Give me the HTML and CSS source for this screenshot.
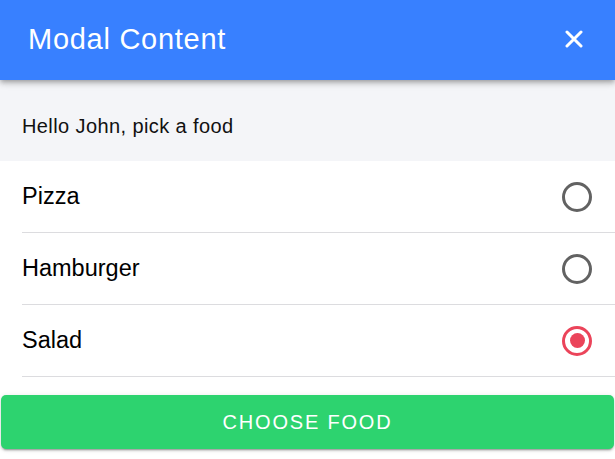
FILE: index.html
```html
<!DOCTYPE html>
<html>
<head>
<meta charset="utf-8">
<link rel="stylesheet" href="styles.css">
</head>
<body>
<div class="modal">
  <header class="toolbar">
    <h1 class="title">Modal Content</h1>
    <button class="close" aria-label="Close">
      <svg width="18" height="18" viewBox="0 0 18 18"><path d="M2 2 L16 16 M16 2 L2 16" stroke="#fff" stroke-width="3" stroke-linecap="round"/></svg>
    </button>
  </header>
  <div class="greeting">Hello John, pick a food</div>
  <div class="list">
    <div class="item"><div class="item-inner"><span class="label">Pizza</span><span class="radio"></span></div></div>
    <div class="item"><div class="item-inner"><span class="label">Hamburger</span><span class="radio"></span></div></div>
    <div class="item"><div class="item-inner"><span class="label">Salad</span><span class="radio checked"></span></div></div>
  </div>
  <div class="actions">
    <button class="choose">CHOOSE FOOD</button>
  </div>
</div>
</body>
</html>
```

FILE: styles.css
```css
html, body {
  margin: 0;
  padding: 0;
  background: #fff;
  font-family: "Liberation Sans", Arial, sans-serif;
}
.modal {
  width: 615px;
  height: 459px;
  overflow: hidden;
}
.toolbar {
  position: relative;
  z-index: 2;
  height: 80px;
  background: #3880ff;
  display: flex;
  align-items: center;
  justify-content: space-between;
  padding: 0 27px 2px 28px;
  box-sizing: border-box;
  box-shadow: 0 2px 4px -1px rgba(0,0,0,.2), 0 4px 5px 0 rgba(0,0,0,.14), 0 1px 10px 0 rgba(0,0,0,.12);
}
.title {
  margin: 0;
  color: #fff;
  font-weight: 400;
  font-size: 29px;
  letter-spacing: 0.025em;
}
.close {
  background: none;
  border: 0;
  padding: 0;
  width: 28px;
  height: 28px;
  display: flex;
  align-items: center;
  justify-content: center;
}
.greeting {
  height: 81px;
  box-sizing: border-box;
  padding-top: 12px;
  background: #f4f5f8;
  display: flex;
  align-items: center;
  padding-left: 22px;
  font-size: 20px;
  color: #111;
  letter-spacing: 0.02em;
}
.item {
  padding-left: 22px;
}
.item-inner {
  height: 72px;
  box-sizing: border-box;
  border-bottom: 1px solid #dcdcdf;
  display: flex;
  align-items: center;
  justify-content: space-between;
  padding-right: 23px;
}
.label {
  font-size: 23.5px;
  color: #000;
}
.radio {
  width: 30px;
  height: 30px;
  box-sizing: border-box;
  border: 3px solid #626262;
  border-radius: 50%;
  display: flex;
  align-items: center;
  justify-content: center;
}
.radio.checked {
  border-color: #eb445a;
}
.radio.checked::after {
  content: "";
  width: 15px;
  height: 15px;
  border-radius: 50%;
  background: #eb445a;
}
.actions {
  padding: 18px 1px 0;
}
.choose {
  width: 100%;
  height: 54px;
  border: 0;
  border-radius: 5px;
  background: #2dd36f;
  color: #fff;
  font-family: "Liberation Sans", Arial, sans-serif;
  font-size: 20px;
  letter-spacing: 0.09em;
  box-shadow: 0 3px 1px -2px rgba(0,0,0,.2), 0 2px 2px 0 rgba(0,0,0,.14), 0 1px 5px 0 rgba(0,0,0,.12);
}
```
